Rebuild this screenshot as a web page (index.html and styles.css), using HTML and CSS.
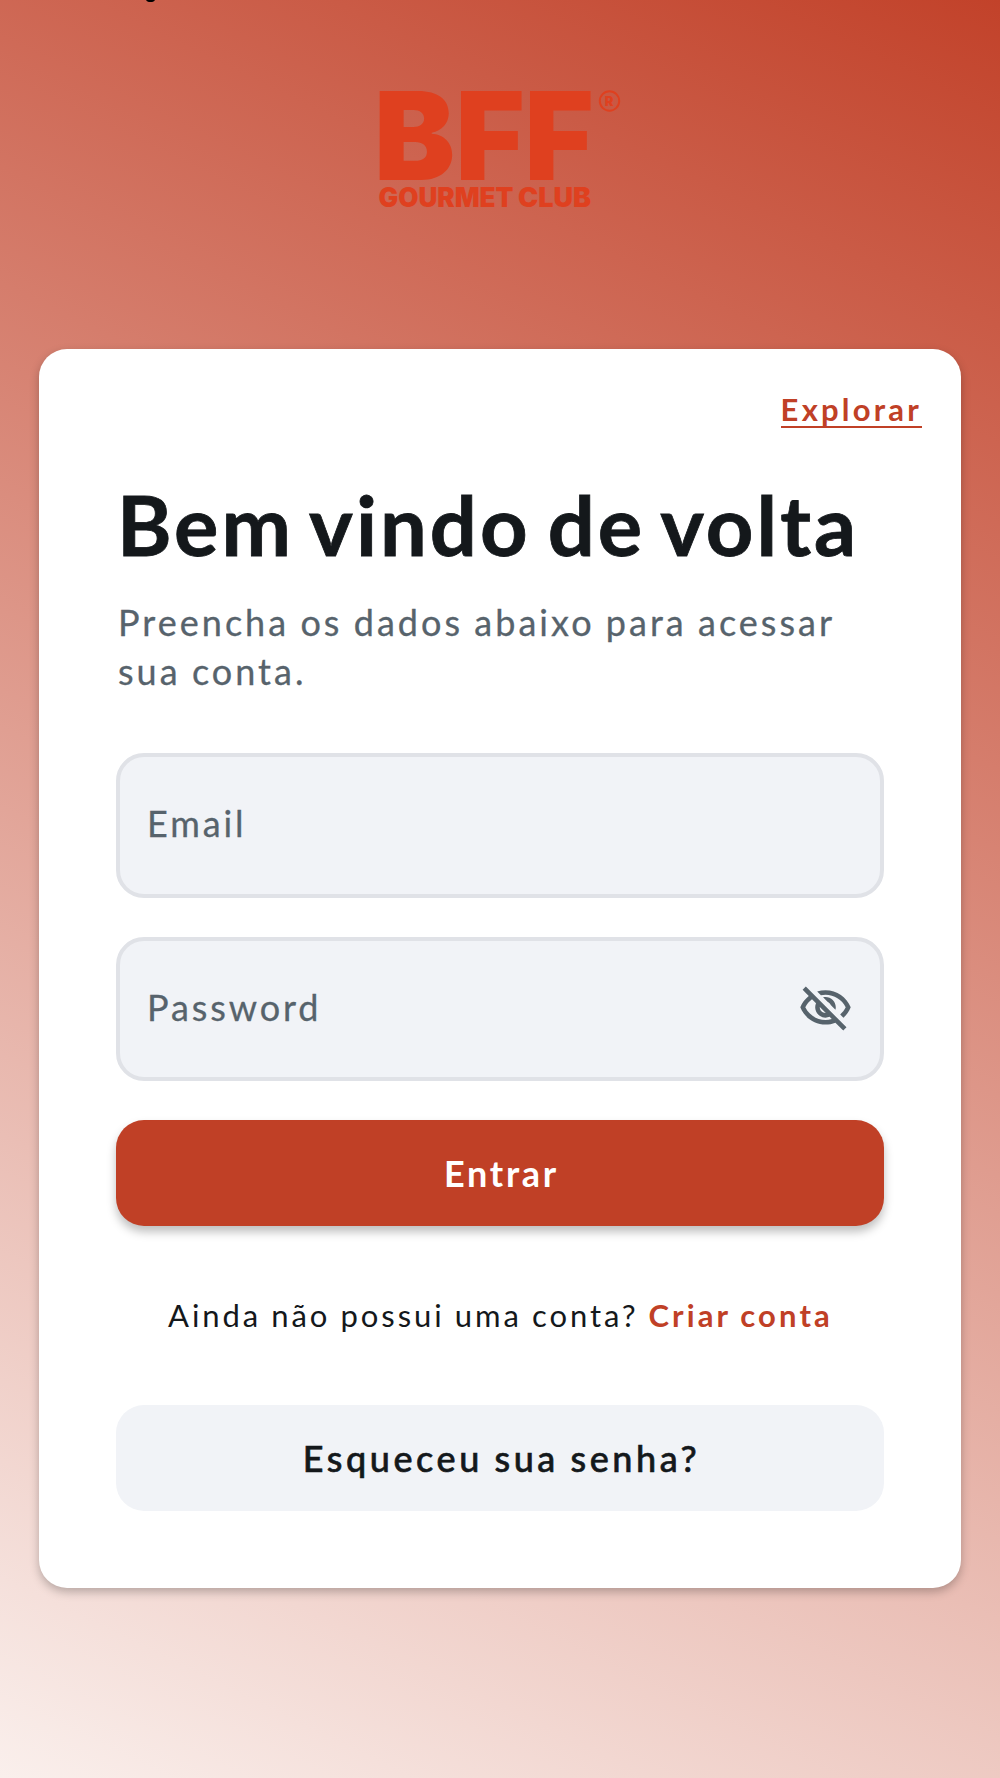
FILE: index.html
```html
<!DOCTYPE html>
<html lang="pt-BR">
<head>
    <meta charset="UTF-8">
    <meta name="viewport" content="width=device-width, initial-scale=1.0">
    <title>BFF Gourmet Club</title>
    <link rel="stylesheet" href="styles.css">
</head>
<body>
    <div class="status-mark"></div>

    <header class="logo">
        <svg width="244" height="124" viewBox="0 0 244 124" role="img" aria-label="BFF Gourmet Club">
            <g class="logo-big">
                <text x="-5" y="89.500" textLength="81" lengthAdjust="spacingAndGlyphs">B</text>
                <text x="76.500" y="89.500" textLength="69" lengthAdjust="spacingAndGlyphs">F</text>
                <text x="145.500" y="89.500" textLength="69" lengthAdjust="spacingAndGlyphs">F</text>
            </g>
            <text class="logo-small" x="-0.500" y="117" textLength="135" lengthAdjust="spacingAndGlyphs">GOURMET</text>
            <text class="logo-small" x="139" y="117" textLength="73" lengthAdjust="spacingAndGlyphs">CLUB</text>
            <circle class="logo-ring" cx="230.500" cy="11" r="9.700"/>
            <text class="logo-reg" x="225.800" y="15.700">R</text>
        </svg>
    </header>

    <main class="card">
        <a href="#" class="explore">Explorar</a>
        <h1 class="title">Bem vindo de volta</h1>
        <p class="subtitle">Preencha os dados abaixo para acessar<br>sua conta.</p>

        <form class="login-form">
            <div class="field">
                <span class="label">Email</span>
            </div>
            <div class="field">
                <span class="label">Password</span>
                <svg class="eye" viewBox="0 0 24 24">
                    <path d="M12 6c3.790 0 7.170 2.130 8.820 5.500-.590 1.220-1.420 2.270-2.410 3.120l1.410 1.410c1.390-1.230 2.490-2.770 3.180-4.530C21.270 7.110 17 4 12 4c-1.270 0-2.490.200-3.640.570l1.650 1.650C10.660 6.090 11.320 6 12 6zm-1.070 1.140L13 9.210c.570.250 1.030.710 1.280 1.280l2.070 2.070c.080-.340.140-.700.140-1.070C16.500 9.010 14.480 7 12 7c-.370 0-.720.050-1.070.140zM2.010 3.870l2.680 2.680C3.060 7.830 1.770 9.530 1 11.500 2.730 15.890 7 19 12 19c1.520 0 2.980-.290 4.320-.820l3.420 3.420 1.410-1.410L3.420 2.450 2.010 3.870zm7.500 7.500l2.610 2.610c-.040.010-.080.020-.120.020-1.380 0-2.500-1.120-2.500-2.500 0-.050.010-.080.010-.130zm-3.400-3.400l1.750 1.750c-.230.550-.360 1.150-.360 1.780 0 2.480 2.020 4.500 4.500 4.500.630 0 1.230-.130 1.770-.360l.980.980c-.880.240-1.800.380-2.750.380-3.790 0-7.170-2.130-8.820-5.500.700-1.430 1.720-2.610 2.930-3.530z"/>
                </svg>
            </div>
            <button type="button" class="btn btn-primary">Entrar</button>
        </form>

        <p class="signup"><span class="question">Ainda não possui uma conta?</span><a href="#" class="create">Criar conta</a></p>
        <button type="button" class="btn btn-secondary">Esqueceu sua senha?</button>
    </main>
</body>
</html>
```
FILE: styles.css
```css
* {
    box-sizing: border-box;
}
body {
    margin: 0;
    height: 1778px;
    overflow: hidden;
    background: linear-gradient(206deg, #c2422a 0, #fdf9f7 2150px);
    color: #14181b;
    font-family: Lato, "Open Sans", sans-serif;
}
.status-mark {
    position: absolute;
    top: -4px;
    left: 146px;
    width: 9px;
    height: 6px;
    border-radius: 50%;
    background: #000;
}
.logo {
    height: 349px;
    padding: 90px 0 0 379px;
}
.logo svg {
    display: block;
    overflow: visible;
    fill: #df401f;
    font-family: Inter, sans-serif;
    font-weight: 900;
}
.logo-big {
    font-size: 122.500px;
}
.logo-small {
    font-size: 26.500px;
}
.logo-reg {
    font-size: 13px;
}
.logo-ring {
    fill: none;
    stroke: #df401f;
    stroke-width: 2;
}
.card {
    display: flex;
    flex-direction: column;
    width: 922px;
    height: 1239px;
    margin: 0 auto;
    padding: 42px 77px 77px;
    background: #fff;
    border-radius: 28px;
    box-shadow: 0 4px 10px rgba(0, 0, 0, 0.25);
}
.explore {
    align-self: flex-end;
    height: 37px;
    margin-right: -38px;
    border-bottom: 2px solid #c04026;
    color: #c04026;
    font-size: 31px;
    font-weight: 700;
    line-height: 36px;
    letter-spacing: 3.200px;
    text-decoration: none;
}
.title {
    margin: 46px 0 0 1px;
    font-size: 83px;
    font-weight: 700;
    line-height: 100px;
    letter-spacing: 3px;
    word-spacing: -6px;
    white-space: nowrap;
    -webkit-text-stroke: 0.800px #14181b;
}
.subtitle {
    margin: 24px 0 0 2px;
    color: #57636c;
    font-size: 36px;
    line-height: 49px;
    letter-spacing: 3.030px;
    word-spacing: -1px;
    white-space: nowrap;
    -webkit-text-stroke: 0.300px #57636c;
}
.login-form {
    display: flex;
    flex-direction: column;
    gap: 39px;
    margin-top: 57px;
}
.field {
    display: flex;
    align-items: center;
    justify-content: space-between;
    height: 144.500px;
    padding: 0 27px 0 27px;
    background: #f1f3f7;
    border: 4px solid #e0e2e7;
    border-radius: 28px;
    color: #57636c;
    font-size: 36px;
    letter-spacing: 2.900px;
    -webkit-text-stroke: 0.300px #57636c;
}
.label {
    padding-bottom: 4px;
}
.eye {
    width: 55px;
    height: 55px;
    fill: #57636c;
}
.btn {
    width: 100%;
    height: 106px;
    padding: 0 0 0 3px;
    border: none;
    border-radius: 28px;
    font-family: inherit;
    font-size: 36px;
}
.btn-primary {
    background: #c04026;
    color: #fff;
    font-weight: 700;
    letter-spacing: 2.700px;
    box-shadow: 0 6px 10px rgba(0, 0, 0, 0.25);
}
.btn-secondary {
    margin-top: auto;
    background: #f1f3f7;
    color: #14181b;
    font-weight: 500;
    letter-spacing: 3.550px;
    word-spacing: -1px;
    -webkit-text-stroke: 0.600px #14181b;
}
.signup {
    display: flex;
    gap: 10px;
    margin: 71px 0 0 52px;
    font-size: 31px;
    line-height: 37px;
    letter-spacing: 2.950px;
    word-spacing: -0.800px;
    white-space: nowrap;
}
.create {
    color: #c04026;
    font-weight: 700;
    letter-spacing: 3.100px;
    text-decoration: none;
}
```
